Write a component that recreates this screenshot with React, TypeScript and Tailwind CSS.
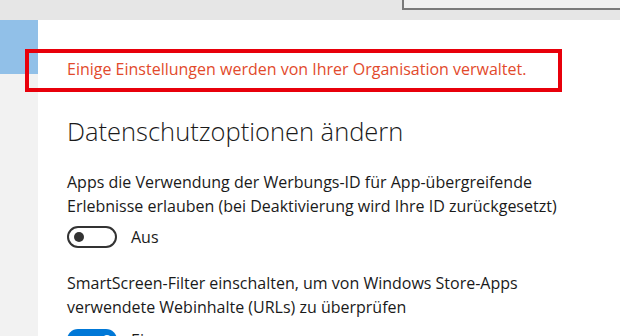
import React from "react";

export default function App() {
  return (
    <div
      className="relative w-[620px] h-[336px] overflow-hidden bg-white flex flex-col"
      style={{ fontFamily: '"Open Sans", "Noto Sans", sans-serif' }}
    >
      {/* top bar */}
      <div className="h-[20px] shrink-0 bg-[#e6e6e6] flex items-end justify-start overflow-hidden pb-[10px] pl-[402px]">
        <div className="h-[34px] w-[240px] shrink-0 border-2 border-[#7a7a7a] bg-[#f0f0f0] pl-[21px] pt-[2px] text-[15px] leading-[20px] text-[#666]">
          Einstellung suchen
        </div>
      </div>

      <div className="flex flex-1">
        {/* sidebar */}
        <div className="w-[38px] shrink-0 bg-[#f2f2f2]">
          <div className="h-[54px] bg-[#91c0e8]" />
        </div>

        {/* main */}
        <div className="flex-1 pl-[29px] text-[#1a1a1a]">
          <div className="pt-[39px] text-[16px] leading-[20px] text-[#e24a2c]">
            Einige Einstellungen werden von Ihrer Organisation verwaltet.
          </div>
          <h1 className="mt-[37px] text-[25.5px] leading-[31px] font-light text-[#1a1a1a]">
            Datenschutzoptionen ändern
          </h1>
          <p className="mt-[23px] text-[16px] leading-[24px] w-[520px]">
            Apps die Verwendung der Werbungs-ID für App-übergreifende Erlebnisse erlauben (bei Deaktivierung wird Ihre ID zurückgesetzt)
          </p>
          <div className="mt-[8px] flex items-center gap-[14px]">
            <div className="w-[50px] h-[22px] rounded-full border-2 border-[#333] flex items-center pl-[5px]">
              <div className="w-[10px] h-[10px] rounded-full bg-[#333]" />
            </div>
            <span className="text-[16px] leading-[22px]">Aus</span>
          </div>
          <p className="mt-[23px] text-[16px] leading-[24px] w-[520px]">
            SmartScreen-Filter einschalten, um von Windows Store-Apps verwendete Webinhalte (URLs) zu überprüfen
          </p>
          <div className="mt-[10px] flex items-center gap-[14px]">
            <div className="w-[50px] h-[22px] rounded-full bg-[#0078d7] flex items-center justify-end pr-[5px]">
              <div className="w-[10px] h-[10px] rounded-full bg-white" />
            </div>
            <span className="text-[16px] leading-[22px]">Ein</span>
          </div>
        </div>
      </div>

      {/* annotation box */}
      <div className="absolute left-[25px] top-[49px] w-[537px] h-[43px] border-[4px] border-[#e8000b]" />
    </div>
  );
}
